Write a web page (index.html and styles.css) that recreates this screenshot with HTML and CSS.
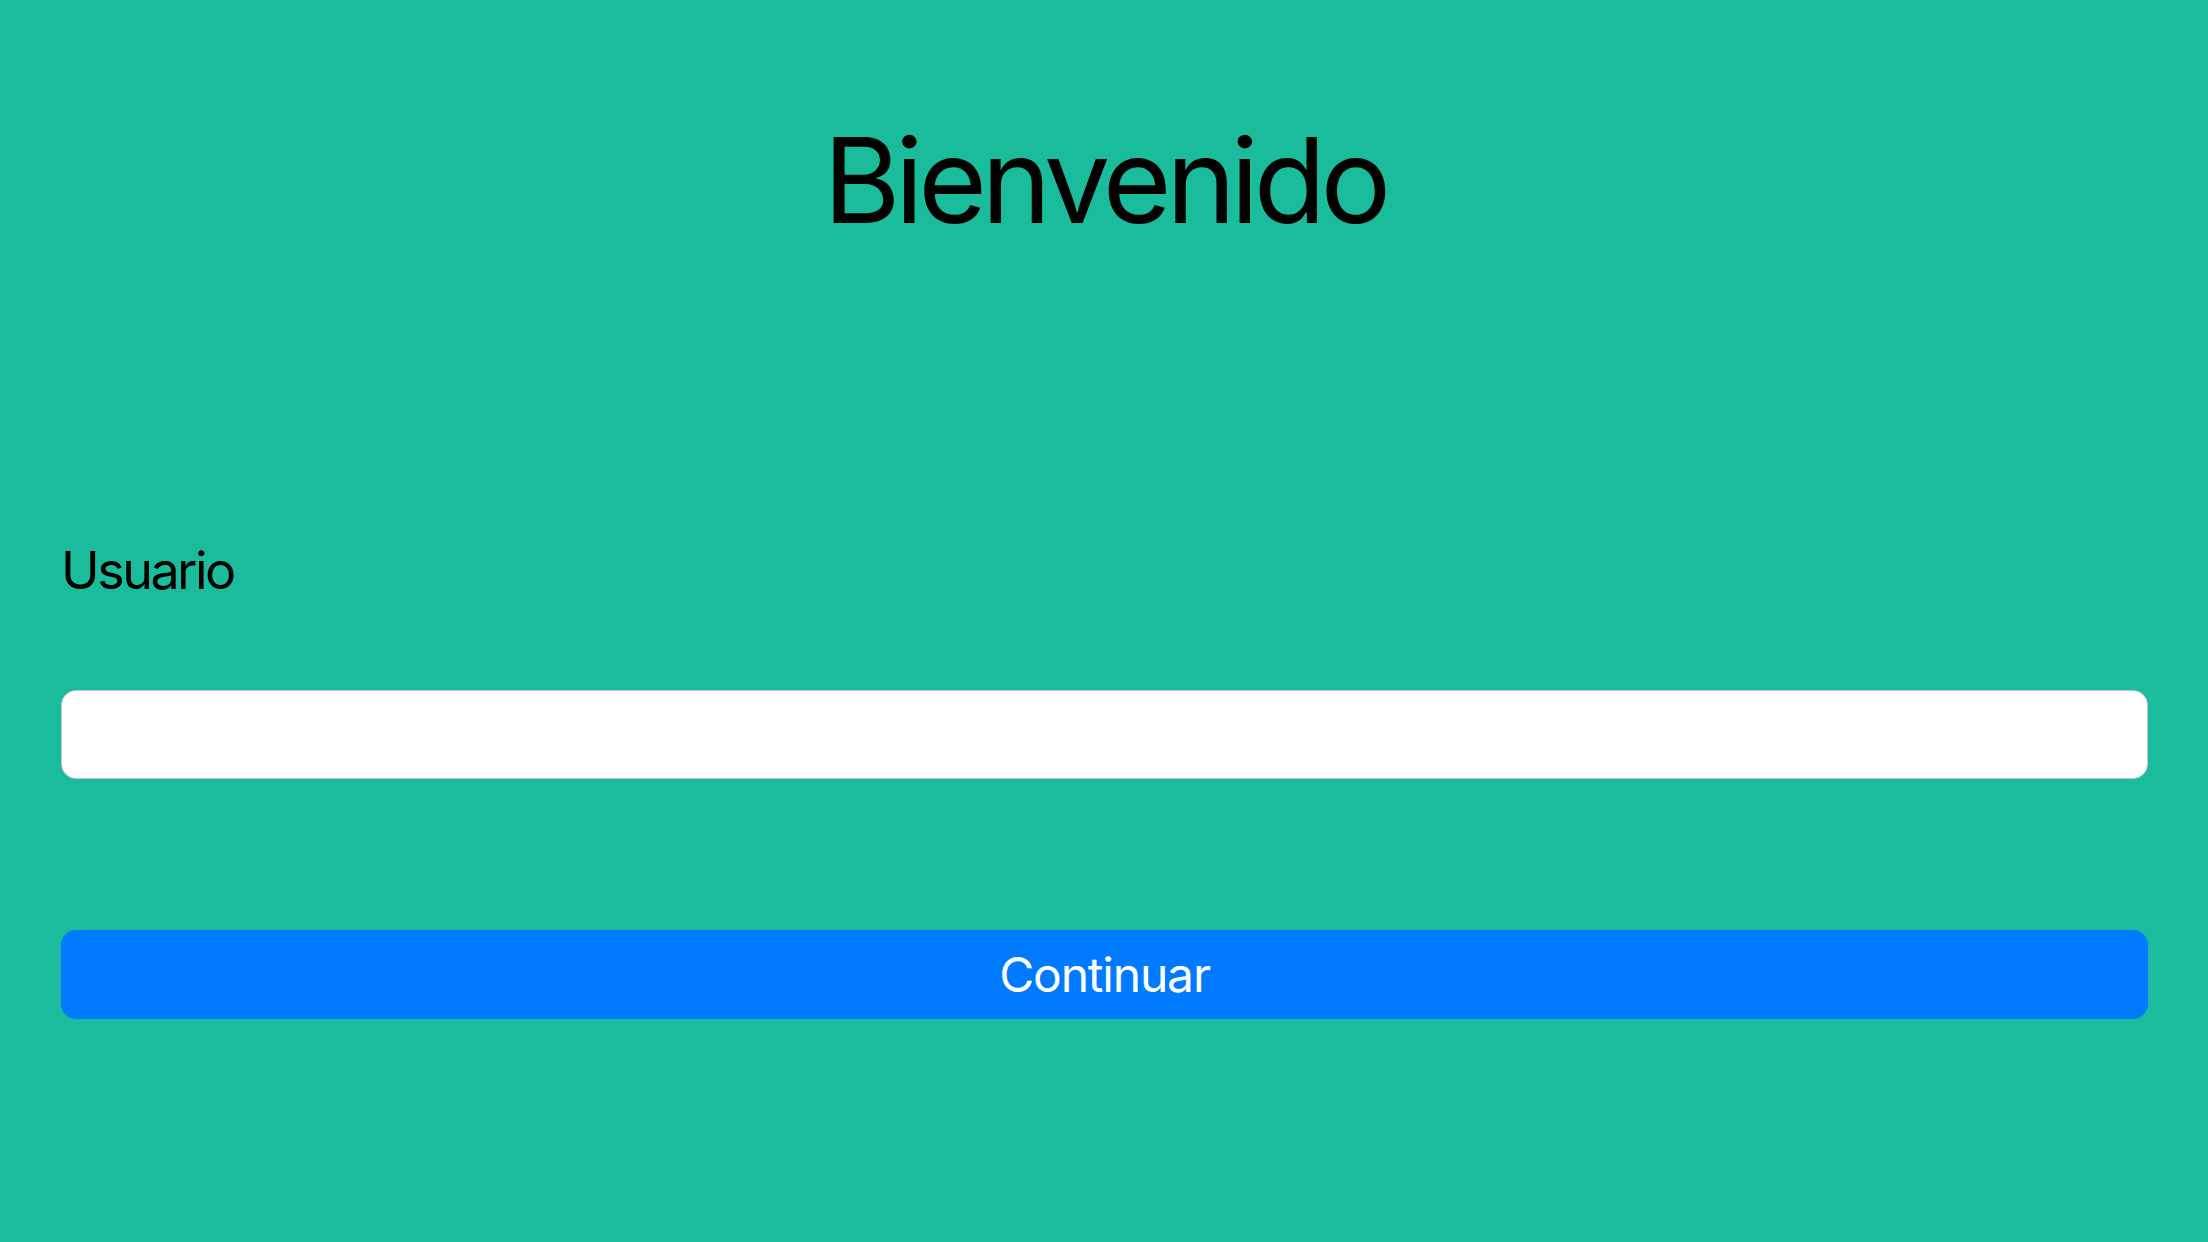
FILE: index.html
```html
<!DOCTYPE html>
<html lang="es">
<head>
<meta charset="utf-8">
<title>Bienvenido</title>
<link rel="stylesheet" href="styles.css">
</head>
<body>
<main class="screen">
  <h1 class="title">Bienvenido</h1>
  <label class="label" for="user">Usuario</label>
  <input class="field" id="user" type="text">
  <button class="btn" type="button">Continuar</button>
</main>
</body>
</html>
```
FILE: styles.css
```css
html, body {
  margin: 0;
  padding: 0;
  background: #1abc9c;
}
body {
  font-family: Inter, "Noto Sans", "Liberation Sans", sans-serif;
  width: 2208px;
  height: 1242px;
  overflow: hidden;
}
.screen {
  display: flex;
  flex-direction: column;
  padding: 121px 60px 0 61px;
  box-sizing: border-box;
}
.title {
  margin: 0;
  font-size: 118px;
  line-height: 118px;
  font-weight: 400;
  color: #000;
  text-align: center;
  letter-spacing: -5.4px;
}
.label {
  margin-top: 306px;
  font-size: 52px;
  line-height: 52px;
  color: #000;
  letter-spacing: -2.5px;
}
.field {
  margin: 93px 0 0 0;
  height: 89px;
  box-sizing: border-box;
  border: 1px solid #c8c8cc;
  border-radius: 15px;
  background: #fff;
  padding: 0 20px;
  font-size: 40px;
  outline: none;
}
.btn {
  margin-top: 151px;
  height: 89px;
  border: none;
  border-radius: 15px;
  background: #007aff;
  color: #fff;
  font-family: inherit;
  font-size: 48px;
  font-weight: 400;
  letter-spacing: -1.2px;
  display: flex;
  align-items: center;
  justify-content: center;
  padding: 0;
}
```
